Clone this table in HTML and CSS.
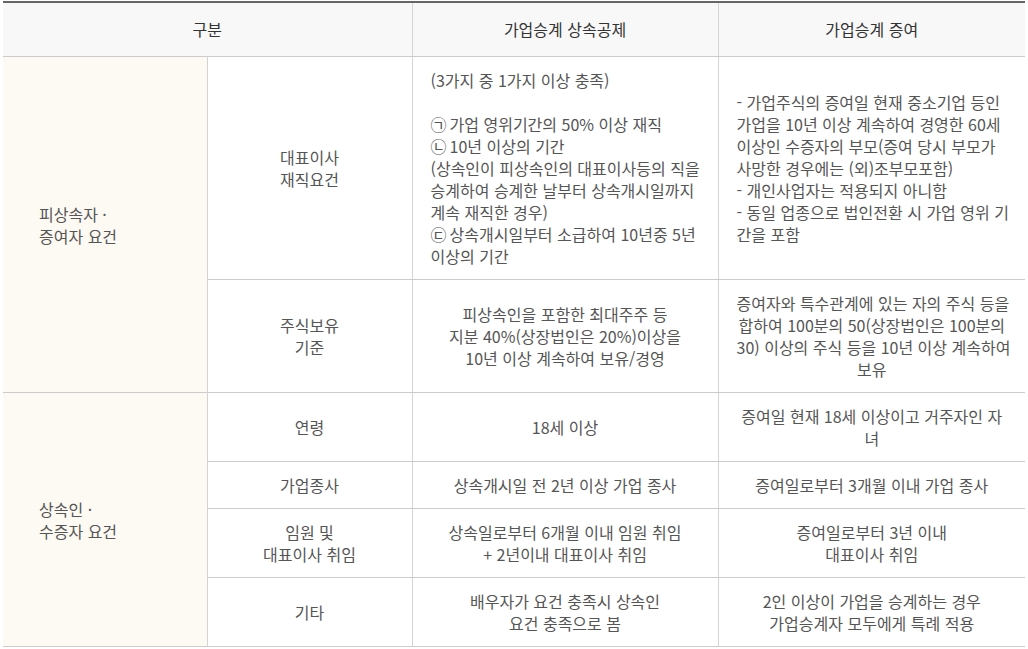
FILE: index.html
```html
<!DOCTYPE html>
<html lang="ko">
<head>
<meta charset="utf-8">
<link rel="stylesheet" href="styles.css">
</head>
<body>
<div class="wrap">
<table class="tbl">
  <colgroup>
    <col class="c1"><col class="c2"><col class="c3"><col class="c4">
  </colgroup>
  <thead>
    <tr>
      <th colspan="2">구분</th>
      <th>가업승계 상속공제</th>
      <th>가업승계 증여</th>
    </tr>
  </thead>
  <tbody>
    <tr>
      <td rowspan="2" class="grp">피상속자 ·<br>증여자 요건</td>
      <td class="sub">대표이사<br>재직요건</td>
      <td class="left nw">(3가지 중 1가지 이상 충족)<br><br><span class="num">㉠</span>가업 영위기간의 50% 이상 재직<br><span class="num">㉡</span>10년 이상의 기간<br>(상속인이 피상속인의 대표이사등의 직을<br>승계하여 승계한 날부터 상속개시일까지<br>계속 재직한 경우)<br><span class="num">㉢</span>상속개시일부터 소급하여 10년중 5년<br>이상의 기간</td>
      <td class="left nw">- 가업주식의 증여일 현재 중소기업 등인<br>가업을 10년 이상 계속하여 경영한 60세<br>이상인 수증자의 부모(증여 당시 부모가<br>사망한 경우에는 (외)조부모포함)<br>- 개인사업자는 적용되지 아니함<br>- 동일 업종으로 법인전환 시 가업 영위 기<br>간을 포함</td>
    </tr>
    <tr>
      <td class="sub">주식보유<br>기준</td>
      <td class="nw">피상속인을 포함한 최대주주 등<br>지분 40%(상장법인은 20%)이상을<br>10년 이상 계속하여 보유/경영</td>
      <td class="nw">증여자와 특수관계에 있는 자의 주식 등을<br>합하여 100분의 50(상장법인은 100분의<br>30) 이상의 주식 등을 10년 이상 계속하여<br>보유</td>
    </tr>
    <tr>
      <td rowspan="4" class="grp">상속인 ·<br>수증자 요건</td>
      <td class="sub">연령</td>
      <td>18세 이상</td>
      <td class="nw">증여일 현재 18세 이상이고 거주자인 자<br>녀</td>
    </tr>
    <tr>
      <td class="sub">가업종사</td>
      <td>상속개시일 전 2년 이상 가업 종사</td>
      <td>증여일로부터 3개월 이내 가업 종사</td>
    </tr>
    <tr>
      <td class="sub">임원 및<br>대표이사 취임</td>
      <td class="nw">상속일로부터 6개월 이내 임원 취임<br>+ 2년이내 대표이사 취임</td>
      <td class="nw">증여일로부터 3년 이내<br>대표이사 취임</td>
    </tr>
    <tr>
      <td class="sub">기타</td>
      <td class="nw">배우자가 요건 충족시 상속인<br>요건 충족으로 봄</td>
      <td class="nw">2인 이상이 가업을 승계하는 경우<br>가업승계자 모두에게 특례 적용</td>
    </tr>
  </tbody>
</table>
</div>
</body>
</html>
```
FILE: styles.css
```css
html, body {
  margin: 0;
  padding: 0;
  background: #ffffff;
}
.wrap {
  padding: 1px 3px 0 3px;
}
.tbl {
  width: 1022px;
  border-collapse: collapse;
  table-layout: fixed;
  border-top: 2px solid #666666;
  font-family: "Noto Sans CJK KR", "Noto Sans", sans-serif;
  font-size: 16px;
  line-height: 22px;
  color: #555555;
}
.c1 { width: 204px; }
.c2 { width: 205px; }
.c3 { width: 306px; }
.c4 { width: 307px; }
.tbl th {
  background: #f8f8f8;
  color: #333333;
  font-weight: 400;
  padding: 15px 0 16px;
  text-align: center;
  border-bottom: 1px solid #cccccc;
  border-left: 1px solid #d4d4d4;
}
.tbl th:first-child { border-left: none; }
.tbl td {
  padding: 12px 18px;
  text-align: center;
  vertical-align: middle;
  border-bottom: 1px solid #cccccc;
  border-left: 1px solid #d4d4d4;
}
.tbl td.grp {
  background: #fdf9f3;
  text-align: left;
  padding-left: 36px;
  border-left: none;
}
.tbl td.sub { padding: 12px 10px; }
.tbl td.left { text-align: left; }
.tbl td.nw { white-space: nowrap; }
.num {
  margin-right: 3px;
}
```
